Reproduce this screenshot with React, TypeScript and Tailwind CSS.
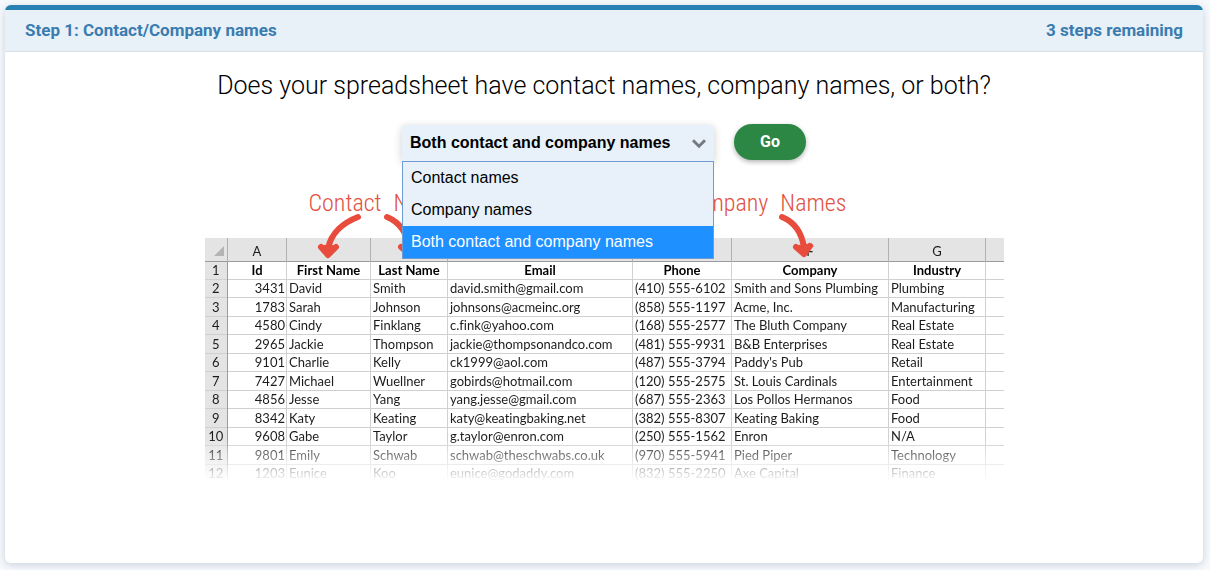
import { useState } from "react";

const choices = ["Contact names", "Company names", "Both contact and company names"];

const letters = ["A", "B", "C", "D", "E", "F", "G", ""];
const headings = ["Id", "First Name", "Last Name", "Email", "Phone", "Company", "Industry", ""];

const contacts = [
  ["3431", "David", "Smith", "david.smith@gmail.com", "(410) 555-6102", "Smith and Sons Plumbing", "Plumbing", ""],
  ["1783", "Sarah", "Johnson", "johnsons@acmeinc.org", "(858) 555-1197", "Acme, Inc.", "Manufacturing", ""],
  ["4580", "Cindy", "Finklang", "c.fink@yahoo.com", "(168) 555-2577", "The Bluth Company", "Real Estate", ""],
  ["2965", "Jackie", "Thompson", "jackie@thompsonandco.com", "(481) 555-9931", "B&B Enterprises", "Real Estate", ""],
  ["9101", "Charlie", "Kelly", "ck1999@aol.com", "(487) 555-3794", "Paddy's Pub", "Retail", ""],
  ["7427", "Michael", "Wuellner", "gobirds@hotmail.com", "(120) 555-2575", "St. Louis Cardinals", "Entertainment", ""],
  ["4856", "Jesse", "Yang", "yang.jesse@gmail.com", "(687) 555-2363", "Los Pollos Hermanos", "Food", ""],
  ["8342", "Katy", "Keating", "katy@keatingbaking.net", "(382) 555-8307", "Keating Baking", "Food", ""],
  ["9608", "Gabe", "Taylor", "g.taylor@enron.com", "(250) 555-1562", "Enron", "N/A", ""],
  ["9801", "Emily", "Schwab", "schwab@theschwabs.co.uk", "(970) 555-5941", "Pied Piper", "Technology", ""],
  ["1203", "Eunice", "Koo", "eunice@godaddy.com", "(832) 555-2250", "Axe Capital", "Finance", ""],
];

function NameSelect() {
  const [selected, setSelected] = useState(2);
  const [open, setOpen] = useState(true);
  return (
    <div className="relative w-[312px]">
      <select
        aria-label="Names in your spreadsheet"
        value={selected}
        onChange={(e) => setSelected(Number(e.target.value))}
        onMouseDown={(e) => {
          e.preventDefault();
          setOpen(!open);
        }}
        className="block h-9 w-full appearance-none rounded-t bg-[#e8f1f9] px-2 font-['Liberation_Sans',sans-serif] text-base font-bold text-black shadow-[0_2px_8px_rgba(0,0,0,0.2)] outline-none"
      >
        {choices.map((choice, i) => (
          <option key={choice} value={i}>
            {choice}
          </option>
        ))}
      </select>
      <svg
        className="pointer-events-none absolute top-3 right-2 h-3 w-4"
        viewBox="0 0 16 12"
        fill="none"
        stroke="#747a80"
        strokeWidth="3"
      >
        <path d="M3 3.2l6 6 6-6" />
      </svg>
      {open && (
        <ul
          role="listbox"
          className="absolute top-full left-0 z-20 w-full border border-[#6d9bd3] bg-[#e8f1f9] font-['Liberation_Sans',sans-serif] text-base leading-8 text-black"
        >
          {choices.map((choice, i) => (
            <li
              key={choice}
              role="option"
              aria-selected={i === selected}
              onClick={() => {
                setSelected(i);
                setOpen(false);
              }}
              className={i === selected ? "bg-[#1e90ff] px-2 text-white" : "px-2"}
            >
              {choice}
            </li>
          ))}
        </ul>
      )}
    </div>
  );
}

function LeftArrow({ className }: { className: string }) {
  return (
    <svg className={className} viewBox="0 0 44 46" fill="none" stroke="#e74c3c" strokeLinecap="round" strokeLinejoin="round">
      <path d="M41 4C28 9 14 19 11 36" strokeWidth="6" />
      <path d="M4 34l7 8l8-8M8 35l3 4 4-4" strokeWidth="6" />
    </svg>
  );
}

function RightArrow({ className }: { className: string }) {
  return (
    <svg className={className} viewBox="0 0 44 46" fill="none" stroke="#e74c3c" strokeLinecap="round" strokeLinejoin="round">
      <path d="M8 4C20 9 28 20 30 35" strokeWidth="6" />
      <path d="M22 34l8 7l6-8M26 35l4 3 3-4" strokeWidth="6" />
    </svg>
  );
}

function Spreadsheet() {
  return (
    <div className="mx-auto w-[799px] max-w-full overflow-hidden [mask-image:linear-gradient(to_bottom,black_200px,transparent_244px)]">
      <table className="h-[242px] w-full table-fixed border-collapse font-['Lato',sans-serif] text-[13px] leading-4 text-[#1c1c1c] [font-variant-ligatures:none]">
        <colgroup>
          <col className="w-[23px]" />
          <col className="w-[59px]" />
          <col className="w-[84px]" />
          <col className="w-[77px]" />
          <col className="w-[185px]" />
          <col className="w-[99px]" />
          <col className="w-[157px]" />
          <col className="w-[97px]" />
          <col />
        </colgroup>
        <thead>
          <tr className="h-[23px] border-b border-[#9b9b9b] bg-[#e4e4e4]">
            <th className="border-r border-[#b1b1b1] p-0 align-bottom">
              <svg className="mb-1 ml-2 h-3 w-3" viewBox="0 0 12 12" fill="#b4b4b4">
                <path d="M11 1v10H1z" />
              </svg>
            </th>
            {letters.map((letter, i) => (
              <th key={i} className="border-r border-[#b1b1b1] p-0 pt-1 font-normal last:border-r-0">
                {letter}
              </th>
            ))}
          </tr>
        </thead>
        <tbody>
          <tr className="h-[18px] border-b border-[#d0d0d0]">
            <th className="border-r border-[#9b9b9b] bg-[#e4e4e4] p-0 font-normal">1</th>
            {headings.map((heading, i) => (
              <th key={i} className="border-r border-[#d0d0d0] p-0 font-bold text-black last:border-r-0">
                {heading}
              </th>
            ))}
          </tr>
          {contacts.map((row, r) => (
            <tr key={r} className="h-[18px] border-b border-[#d0d0d0] odd:h-[19px]">
              <th className="border-r border-[#9b9b9b] bg-[#e4e4e4] p-0 font-normal">{r + 2}</th>
              {row.map((cell, c) => (
                <td
                  key={c}
                  className={
                    c === 0
                      ? "border-r border-[#d0d0d0] p-0 pr-px text-right whitespace-nowrap"
                      : "border-r border-[#d0d0d0] p-0 pl-0.5 whitespace-nowrap last:border-r-0"
                  }
                >
                  {cell}
                </td>
              ))}
            </tr>
          ))}
        </tbody>
      </table>
    </div>
  );
}

export default function App() {
  return (
    <div className="min-h-screen bg-[#f8fafd] pt-[5px] pr-[7px] pb-[7px] pl-[5px] font-['Roboto',sans-serif]">
      <section className="flex min-h-[calc(100vh-12px)] flex-col rounded-md border-t-5 border-[#2980b3] bg-white shadow-[0_2px_10px_rgba(60,90,120,0.25)]">
        <header className="flex items-center justify-between border-b border-[#d5e1ea] bg-[#e8f1f8] px-5 pt-2 pb-[9px] text-[17px] leading-6 font-bold text-[#3a7cb0]">
          <h1>Step 1: Contact/Company names</h1>
          <p>3 steps remaining</p>
        </header>
        <h2 className="pt-4 text-center text-[25px] leading-9 font-light text-black">
          Does your spreadsheet have contact names, company names, or both?
        </h2>
        <form className="mt-5 flex items-start justify-center gap-5" onSubmit={(e) => e.preventDefault()}>
          <div className="pt-px">
            <NameSelect />
          </div>
          <button type="submit" className="h-9 w-[72px] rounded-full bg-[#2c8745] text-base font-bold text-white shadow-[0_2px_5px_rgba(0,0,0,0.3)]">
            Go
          </button>
        </form>
        <figure className="mt-6">
          <figcaption className="relative z-10 mx-auto flex h-[53px] w-[799px] max-w-full items-start justify-between pr-[157px] pl-[104px] font-['Roboto_Condensed','Roboto',sans-serif] text-2xl leading-9 font-light text-[#e2513f]">
            <span className="relative flex gap-3">
              <span>Contact</span>
              <span>Names</span>
              <LeftArrow className="absolute top-7 left-2 h-[46px] w-11" />
              <RightArrow className="absolute top-7 left-[70px] h-[46px] w-11" />
            </span>
            <span className="relative flex gap-3">
              <span>Company</span>
              <span>Names</span>
              <RightArrow className="absolute top-7 right-[29px] h-[46px] w-11" />
            </span>
          </figcaption>
          <Spreadsheet />
        </figure>
      </section>
    </div>
  );
}
